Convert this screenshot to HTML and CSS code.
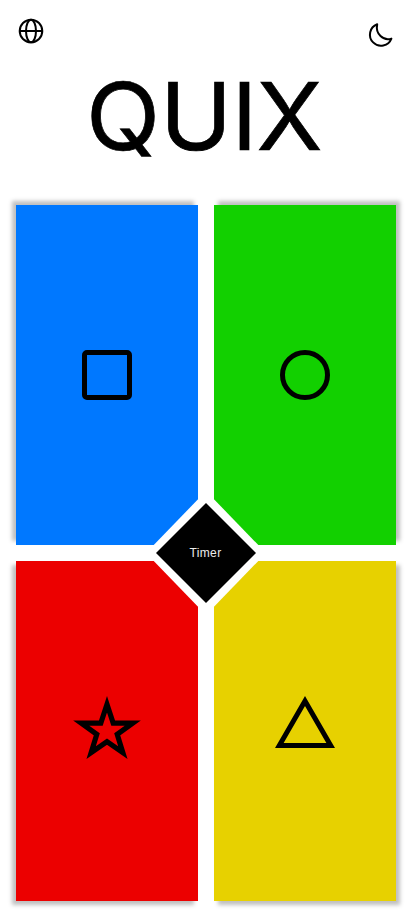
FILE: index.html
```
<!DOCTYPE html>
<html lang="en">
<head>
<meta charset="utf-8">
<meta name="viewport" content="width=device-width, initial-scale=1">
<title>QUIX</title>
<link rel="stylesheet" href="styles.css">
</head>
<body>
<header class="topbar">
  <svg class="globe" viewBox="0 0 26 26"><circle cx="13" cy="13" r="11.3"/><ellipse cx="13" cy="13" rx="5" ry="11.3"/><path d="M1.7 13h22.6"/></svg>
  <svg class="moon" viewBox="0 0 26 26"><path d="M10.2 1.2A11.1 11.1 0 1 0 24.4 15.6C16.3 18.2 8.2 11 10.2 1.2Z"/></svg>
</header>
<h1 class="title">QU<span class="narrow">I</span>X</h1>
<main class="board">
  <div class="card blue"><svg class="shape square" viewBox="0 0 50 50"><rect x="2.5" y="2.5" width="45" height="45" rx="2.5"/></svg></div>
  <div class="card green"><svg class="shape circle" viewBox="0 0 50 50"><circle cx="25" cy="25" r="22.5"/></svg></div>
  <div class="card red"><svg class="shape star" viewBox="0 0 68 66"><path d="M34 8L40 26.3H59.1L43.9 37.2L49.4 55L34 44.2L18.6 55L24.1 37.2L8.9 26.3H28Z"/></svg></div>
  <div class="card yellow"><svg class="shape triangle" viewBox="0 0 60 54"><path d="M30 5L55.7 49.5H4.3Z"/></svg></div>
  <div class="cutout"><button class="timer">Timer</button></div>
</main>
</body>
</html>
```
FILE: styles.css
```
* { box-sizing: border-box; }
body {
  margin: 0;
  background: #fff;
  color: #000;
  font-family: Inter, "Liberation Sans", sans-serif;
}
svg { display: block; fill: none; stroke: #000; }
.topbar {
  display: flex;
  justify-content: space-between;
  height: 68px;
  padding: 18px 19px 0 18px;
}
.globe, .moon { width: 26px; height: 26px; stroke-width: 2; }
.moon { margin-top: 5px; stroke-linejoin: round; }
.title {
  margin: 0;
  height: 137px;
  font-size: 94px;
  font-weight: 400;
  line-height: 96px;
  text-align: center;
  -webkit-text-stroke: .7px #000;
  transform: translate(-1.7px, -.5px) scaleX(1.03);
}
.narrow { margin: 0 -1px 0 -.5px; }
.board {
  position: relative;
  display: grid;
  grid-template-columns: 1fr 1fr;
  grid-template-rows: 340px 340px;
  gap: 16px;
  padding: 0 16px 16px;
}
.card { display: flex; align-items: center; justify-content: center; }
.blue { background: #0078ff; box-shadow: -4px -4px 4px rgba(0,0,0,.25); }
.green { background: #12d000; box-shadow: 4px -4px 4px rgba(0,0,0,.25); }
.red { background: #ec0000; box-shadow: -4px 4px 4px rgba(0,0,0,.25); }
.yellow { background: #e7d100; box-shadow: 4px 4px 4px rgba(0,0,0,.25); }
.shape { width: 50px; height: 50px; stroke-width: 5; stroke-miterlimit: 10; }
.star { width: 70px; height: 68px; margin-bottom: 3px; }
.triangle { width: 60px; height: 54px; margin-bottom: 16px; }
.cutout {
  position: absolute;
  left: 50%;
  top: 348px;
  width: 120px;
  height: 124px;
  transform: translate(-50%, -50%);
  display: flex;
  align-items: center;
  justify-content: center;
  background: #fff;
  clip-path: polygon(50% 0, 100% 50%, 50% 100%, 0 50%);
}
.timer {
  width: 100px;
  height: 100px;
  padding: 0 1px 0 0;
  border: 0;
  background: #000;
  color: #ececec;
  font: 400 12px "Liberation Sans", sans-serif;
  letter-spacing: .35px;
  clip-path: polygon(50% 0, 100% 50%, 50% 100%, 0 50%);
}
```
